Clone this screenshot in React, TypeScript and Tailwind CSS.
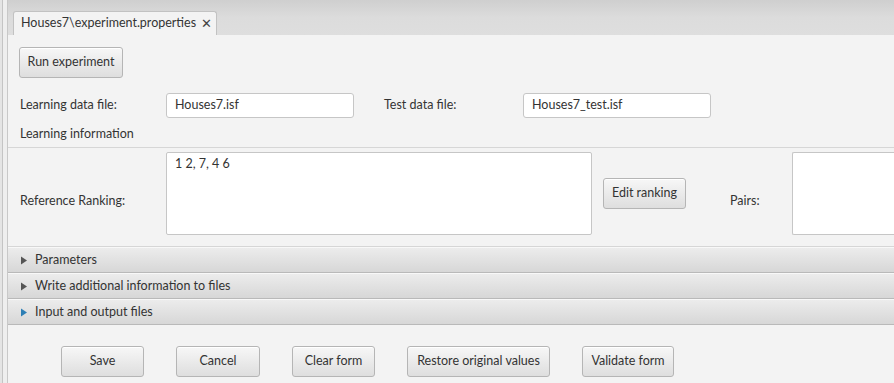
const btn =
  "h-[31px] rounded-[3px] border border-[#b5b5b5] bg-gradient-to-b from-[#f7f7f7] to-[#dedede] text-[#333] shadow-[inset_0_1px_0_#ffffff]";

function Pane({ title, active }: { title: string; active?: boolean }) {
  return (
    <div className="flex h-[26px] items-center border-t border-t-[#f8f8f8] border-b border-b-[#b9b9b9] bg-gradient-to-b from-[#ececec] to-[#d7d7d7] pl-[12px]">
      <svg width="8" height="9" viewBox="0 0 8 9" className="mr-[7px]">
        <path d="M1 0.5 L7 4.5 L1 8.5 Z" fill={active ? "#2d7fb5" : "#555555"} />
      </svg>
      <span>{title}</span>
    </div>
  );
}

export default function App() {
  return (
    <div className="flex h-[383px] w-[894px] overflow-hidden bg-[#f3f3f3] text-[12.5px] text-[#333] [font-family:Lato,sans-serif]">
      {/* left split border */}
      <div className="flex w-[8px] shrink-0">
        <div className="w-[2px] bg-[#e4e4e4]" />
        <div className="w-[1px] bg-[#c4c4c4]" />
        <div className="w-[4px] bg-[#eeeeee]" />
        <div className="w-[1px] bg-[#c8c8c8]" />
      </div>

      <div className="flex flex-1 flex-col">
        {/* tab header */}
        <div className="flex h-[35px] items-end bg-gradient-to-b from-[#cfcfcf] via-[#dcdcdc] to-[#dedede] pl-[5px]">
          <div className="flex h-[24px] w-[204px] items-center rounded-t-[3px] border border-b-0 border-[#c2c2c2] bg-[#f3f3f3] pl-[7px]">
            <span>Houses7\experiment.properties</span>
            <span className="ml-[5px] text-[13px] text-[#444]">✕</span>
          </div>
        </div>

        {/* top form */}
        <div className="flex flex-col px-[11px] pt-[12px]">
          <div>
            <button className={`${btn} h-[30px] w-[104px]`}>Run experiment</button>
          </div>
          <div className="mt-[15px] flex h-[25px] items-center">
            <span className="w-[147px] pl-[1px]">Learning data file:</span>
            <div className="flex h-[25px] w-[188px] items-center rounded-[3px] border border-[#c6c6c6] bg-white pl-[8px]">
              Houses7.isf
            </div>
            <span className="ml-[30px] w-[139px]">Test data file:</span>
            <div className="flex h-[25px] w-[188px] items-center rounded-[3px] border border-[#c6c6c6] bg-white pl-[8px]">
              Houses7_test.isf
            </div>
          </div>
          <div className="mt-[8px] h-[16px] pl-[1px] leading-[16px]">Learning information</div>
        </div>

        {/* ranking row */}
        <div className="mt-[5px] flex h-[100px] items-start border-y border-[#d6d6d6] pl-[12px] pt-[4px]">
          <span className="mt-[40px] w-[146px]">Reference Ranking:</span>
          <div className="h-[83px] w-[426px] rounded-[2px] border border-[#c6c6c6] bg-white pl-[8px] pt-[2px]">
            1 2, 7, 4 6
          </div>
          <button className={`${btn} ml-[11px] mt-[26px] w-[83px]`}>Edit ranking</button>
          <span className="ml-[44px] mt-[40px] w-[62px]">Pairs:</span>
          <div className="h-[83px] flex-1 rounded-l-[2px] border border-r-0 border-[#c6c6c6] bg-white" />
        </div>

        {/* titled panes */}
        <Pane title="Parameters" />
        <Pane title="Write additional information to files" />
        <Pane title="Input and output files" active />

        {/* bottom buttons */}
        <div className="flex gap-[32px] pl-[53px] pt-[21px]">
          <button className={`${btn} w-[83px]`}>Save</button>
          <button className={`${btn} w-[84px]`}>Cancel</button>
          <button className={`${btn} w-[83px]`}>Clear form</button>
          <button className={`${btn} w-[143px]`}>Restore original values</button>
          <button className={`${btn} w-[92px]`}>Validate form</button>
        </div>
      </div>
    </div>
  );
}
